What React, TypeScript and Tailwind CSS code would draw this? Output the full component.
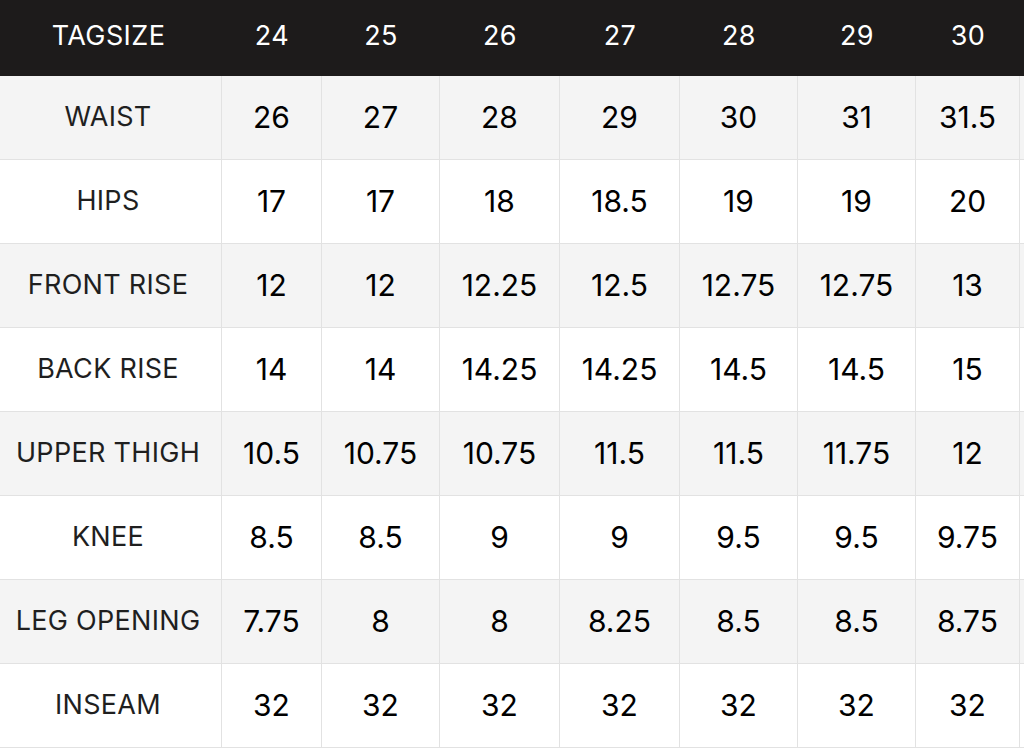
import React from "react"

const sizes = ["24", "25", "26", "27", "28", "29", "30"]

const rows: [string, string[]][] = [
  ["WAIST", ["26", "27", "28", "29", "30", "31", "31.5"]],
  ["HIPS", ["17", "17", "18", "18.5", "19", "19", "20"]],
  ["FRONT RISE", ["12", "12", "12.25", "12.5", "12.75", "12.75", "13"]],
  ["BACK RISE", ["14", "14", "14.25", "14.25", "14.5", "14.5", "15"]],
  ["UPPER THIGH", ["10.5", "10.75", "10.75", "11.5", "11.5", "11.75", "12"]],
  ["KNEE", ["8.5", "8.5", "9", "9", "9.5", "9.5", "9.75"]],
  ["LEG OPENING", ["7.75", "8", "8", "8.25", "8.5", "8.5", "8.75"]],
  ["INSEAM", ["32", "32", "32", "32", "32", "32", "32"]],
]

const cols = "grid grid-cols-[222px_100px_118px_120px_120px_118px_118px_104px_1fr]"

export default function App() {
  return (
    <div className="w-[1024px] h-[750px] overflow-hidden bg-white font-['Inter',sans-serif]">
      <div className={cols + " h-[76px] pb-[4px] bg-[#1d1b1b] text-white text-[27px] tracking-[0.4px] items-center text-center"}>
        <div className="pr-[5px]">TAGSIZE</div>
        {sizes.map((s) => (
          <div key={s}>{s}</div>
        ))}
        <div></div>
      </div>
      {rows.map(([label, vals], i) => (
        <div
          key={label}
          className={
            cols +
            " h-[84px] border-b border-[#e2e2e2] " +
            (i % 2 === 0 ? "bg-[#f4f4f4]" : "bg-white")
          }
        >
          <div className="flex items-center justify-center pr-[5px] border-r border-[#e2e2e2] text-[27px] tracking-[0.3px] text-[#1f1f1f]">
            {label}
          </div>
          {vals.map((v, j) => (
            <div
              key={j}
              className="flex items-center justify-center border-r border-[#e2e2e2] text-[30px] text-black"
            >
              {v}
            </div>
          ))}
          <div></div>
        </div>
      ))}
    </div>
  )
}
